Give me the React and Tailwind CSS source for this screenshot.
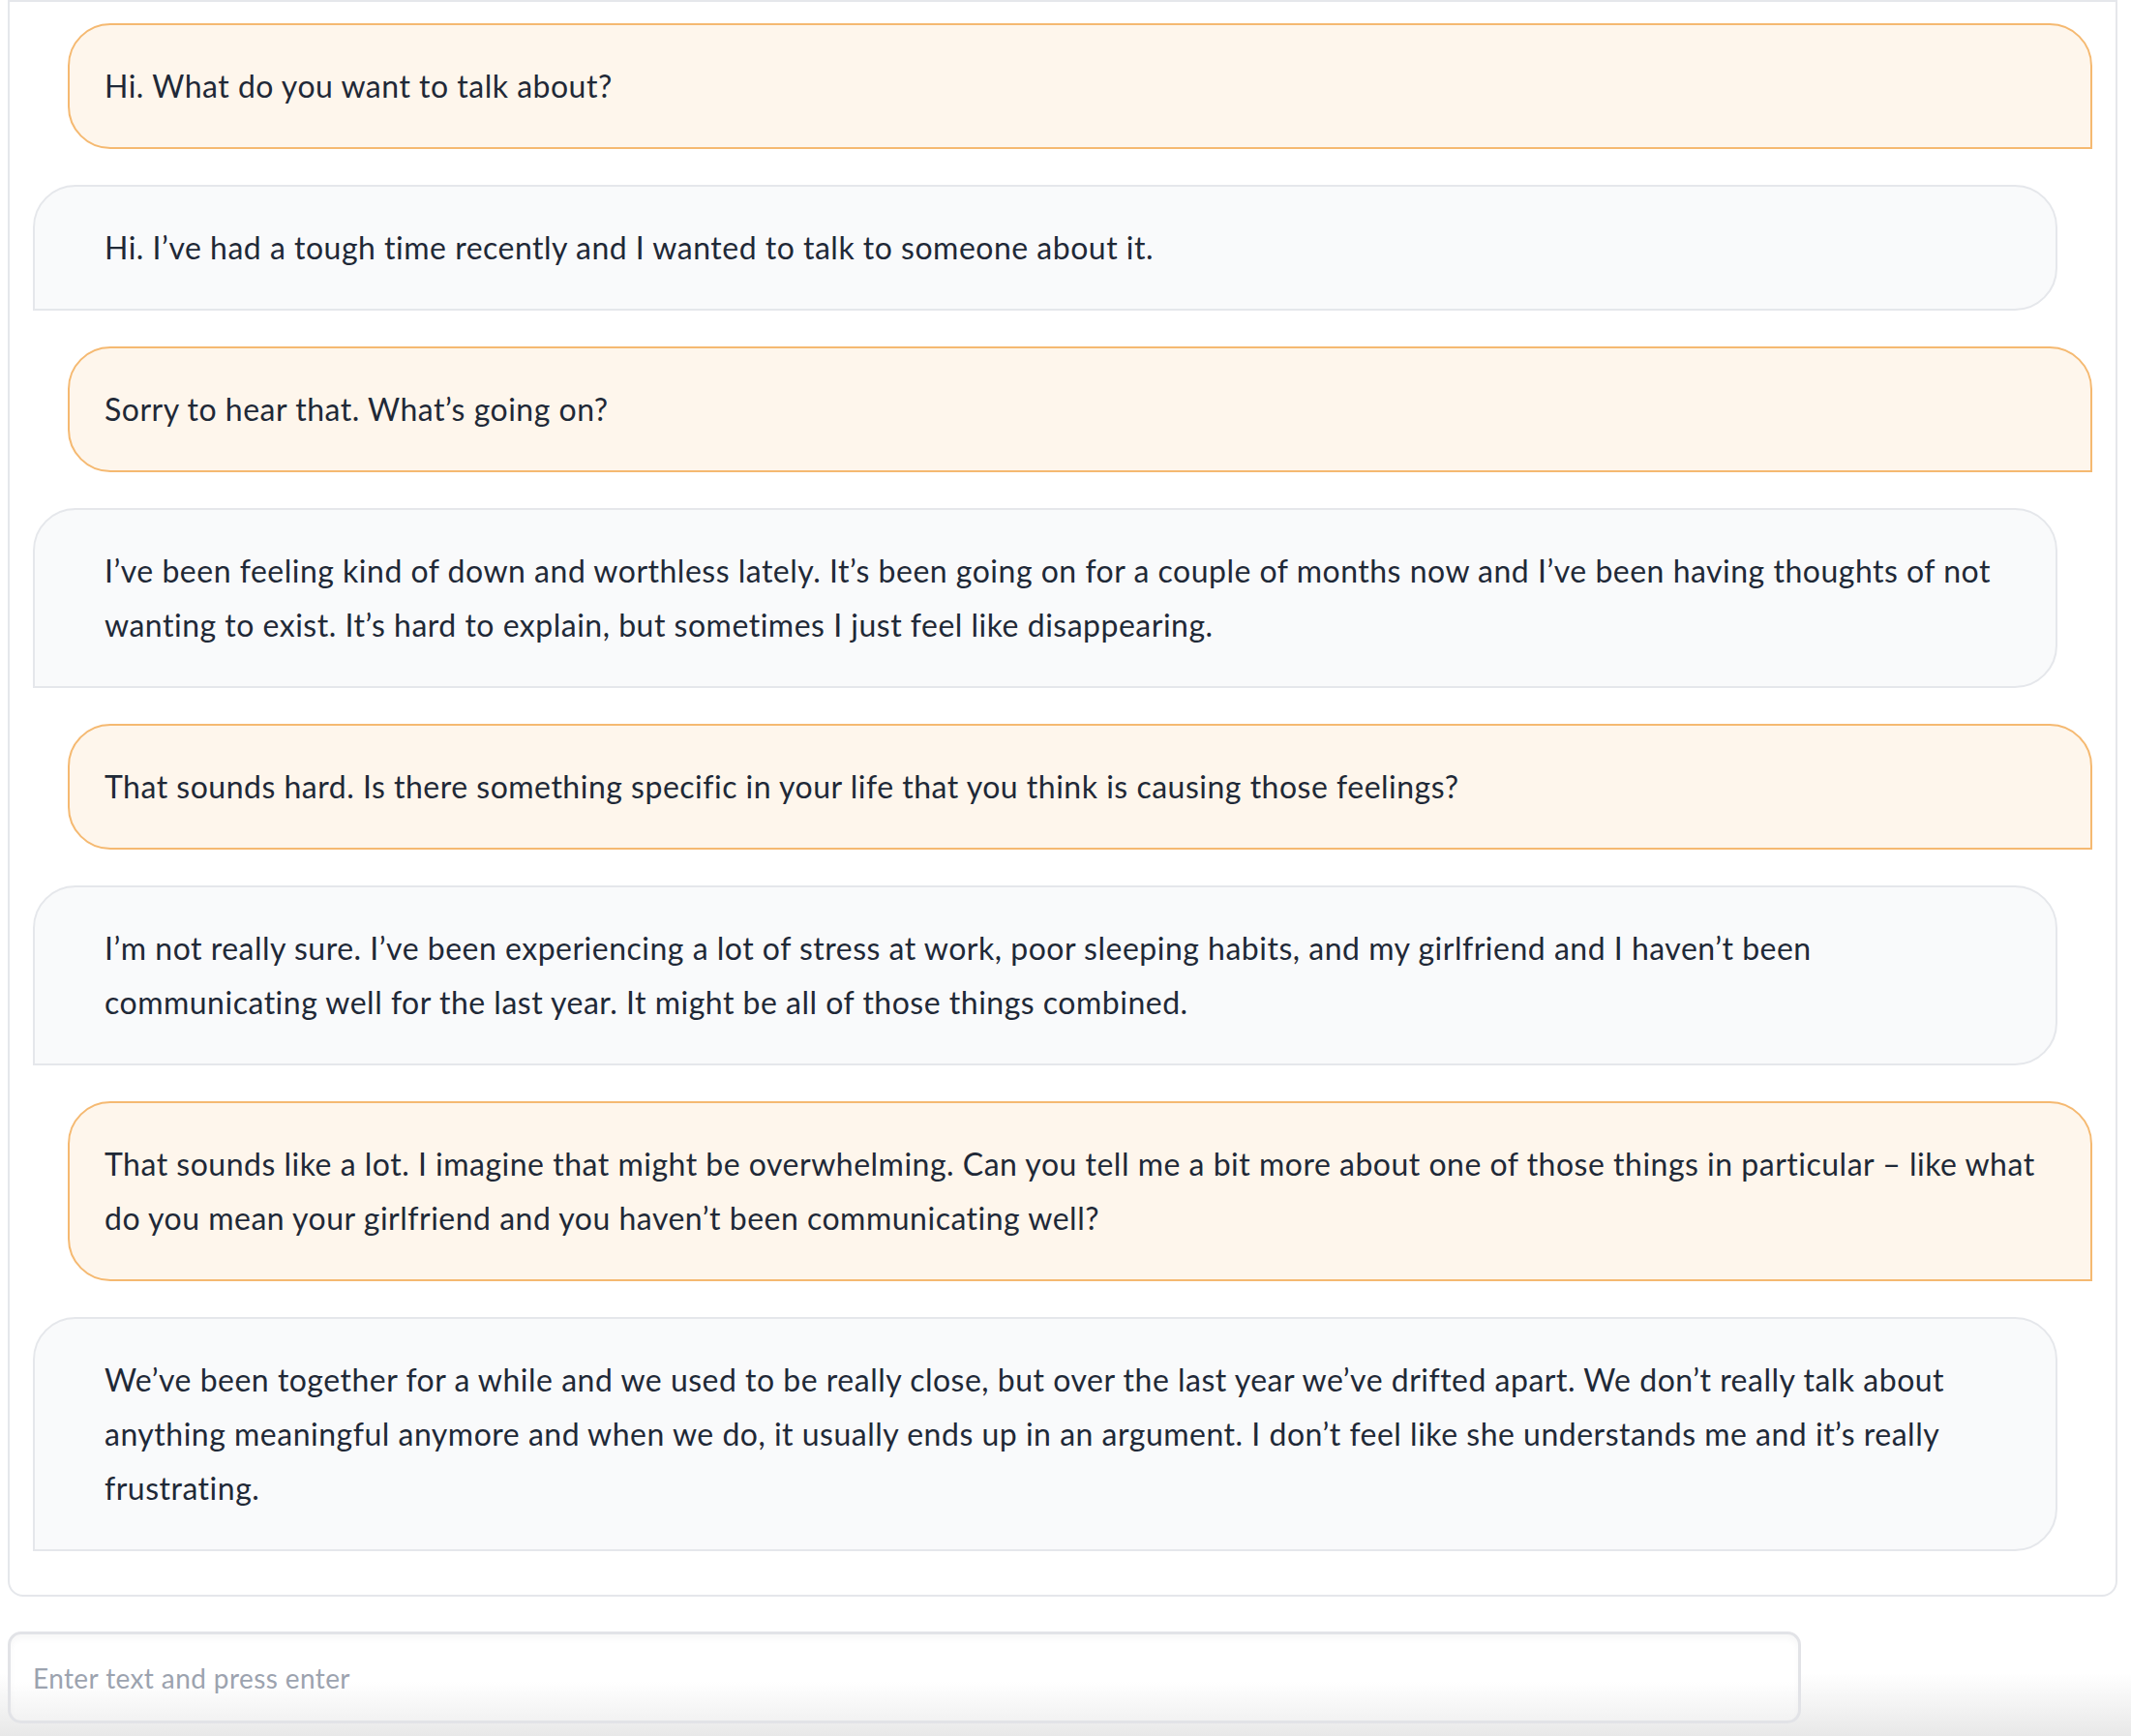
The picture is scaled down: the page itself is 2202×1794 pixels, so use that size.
import React from "react";

const messages = [
  { bot: true, lines: ["Hi. What do you want to talk about?"] },
  { bot: false, lines: ["Hi. I’ve had a tough time recently and I wanted to talk to someone about it."] },
  { bot: true, lines: ["Sorry to hear that. What’s going on?"] },
  {
    bot: false,
    lines: [
      "I’ve been feeling kind of down and worthless lately. It’s been going on for a couple of months now and I’ve been having thoughts of not",
      "wanting to exist. It’s hard to explain, but sometimes I just feel like disappearing.",
    ],
  },
  { bot: true, lines: ["That sounds hard. Is there something specific in your life that you think is causing those feelings?"] },
  {
    bot: false,
    lines: [
      "I’m not really sure. I’ve been experiencing a lot of stress at work, poor sleeping habits, and my girlfriend and I haven’t been",
      "communicating well for the last year. It might be all of those things combined.",
    ],
  },
  {
    bot: true,
    lines: [
      "That sounds like a lot. I imagine that might be overwhelming. Can you tell me a bit more about one of those things in particular – like what",
      "do you mean your girlfriend and you haven’t been communicating well?",
    ],
  },
  {
    bot: false,
    lines: [
      "We’ve been together for a while and we used to be really close, but over the last year we’ve drifted apart. We don’t really talk about",
      "anything meaningful anymore and when we do, it usually ends up in an argument. I don’t feel like she understands me and it’s really",
      "frustrating.",
    ],
  },
];

function Bubble({ bot, lines }) {
  const base =
    "w-[calc(100%-36px)] border-2 py-[35px] pr-[30px] text-[32px] tracking-[0.5px] leading-[56px] text-[#1f2937]";
  const cls = bot
    ? base + " self-end bg-[#fef6ec] border-[#f5b971] pl-[36px] rounded-tl-[44px] rounded-tr-[44px] rounded-bl-[44px] rounded-br-none"
    : base + " self-start bg-[#f9fafb] border-[#e5e7eb] pl-[72px] rounded-tl-[44px] rounded-tr-[44px] rounded-br-[44px] rounded-bl-none";
  return (
    <div className={cls}>
      {lines.map((l, i) => (
        <div key={i} className="whitespace-nowrap">
          {l}
        </div>
      ))}
    </div>
  );
}

export default function App() {
  return (
    <div
      className="w-[2202px] h-[1794px] bg-white flex flex-col overflow-hidden"
      style={{ fontFamily: "Lato, 'Noto Sans', sans-serif" }}
    >
      <div className="pl-[8px] pr-[14px]">
        <div className="border-2 border-[#e5e7eb] rounded-b-[16px] pt-[22px] pb-[45px] px-[24px] flex flex-col gap-[37px] bg-white">
          {messages.map((m, i) => (
            <Bubble key={i} bot={m.bot} lines={m.lines} />
          ))}
        </div>
      </div>
      <div className="flex-1 pt-[36px] pl-[8px] bg-[linear-gradient(to_bottom,#ffffff_55%,#e8e8e8)]">
        <div className="w-[1853px] h-[95px] border-[3px] border-[#e2e3e7] rounded-[14px] bg-[linear-gradient(to_bottom,#ffffff_55%,#f2f2f2)] shadow-[inset_0_5px_6px_rgba(0,0,0,0.03)] flex items-center pl-[23px]">
          <span className="text-[28px] tracking-[0.4px] text-[#9ca3af]">Enter text and press enter</span>
        </div>
      </div>
    </div>
  );
}
